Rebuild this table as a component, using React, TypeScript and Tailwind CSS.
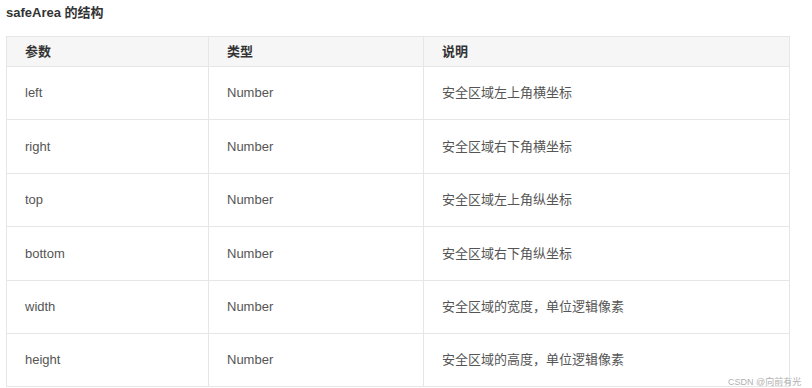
import React from "react";

const rows = [
  ["left", "Number", "安全区域左上角横坐标"],
  ["right", "Number", "安全区域右下角横坐标"],
  ["top", "Number", "安全区域左上角纵坐标"],
  ["bottom", "Number", "安全区域右下角纵坐标"],
  ["width", "Number", "安全区域的宽度，单位逻辑像素"],
  ["height", "Number", "安全区域的高度，单位逻辑像素"],
];

export default function App() {
  return (
    <div
      className="relative w-[812px] h-[388px] bg-white overflow-hidden pl-[6px]"
      style={{ fontFamily: '"Liberation Sans", "Noto Sans CJK SC", sans-serif' }}
    >
      <div className="pt-[4px] h-[36px] text-[13px] font-bold text-[#333] leading-[18px]">
        safeArea 的结构
      </div>
      <table className="border-collapse w-[784px] text-[13px] text-[#555] table-fixed">
        <colgroup>
          <col className="w-[202px]" />
          <col className="w-[215px]" />
          <col />
        </colgroup>
        <thead>
          <tr className="bg-[#f6f6f6] h-[30px]">
            <th className="border border-[#e6e6e6] text-left font-semibold text-[#333] pl-[18px]">参数</th>
            <th className="border border-[#e6e6e6] text-left font-semibold text-[#333] pl-[18px]">类型</th>
            <th className="border border-[#e6e6e6] text-left font-semibold text-[#333] pl-[18px]">说明</th>
          </tr>
        </thead>
        <tbody>
          {rows.map((r) => (
            <tr key={r[0]} className="h-[53.4px]">
              <td className="border border-[#e6e6e6] pl-[18px]">{r[0]}</td>
              <td className="border border-[#e6e6e6] pl-[18px]">{r[1]}</td>
              <td className="border border-[#e6e6e6] pl-[18px]">{r[2]}</td>
            </tr>
          ))}
        </tbody>
      </table>
      <div className="absolute left-[728px] top-[376px] text-[9px] text-[#b0b0b0] leading-[12px]">
        CSDN @向前有光
      </div>
    </div>
  );
}
